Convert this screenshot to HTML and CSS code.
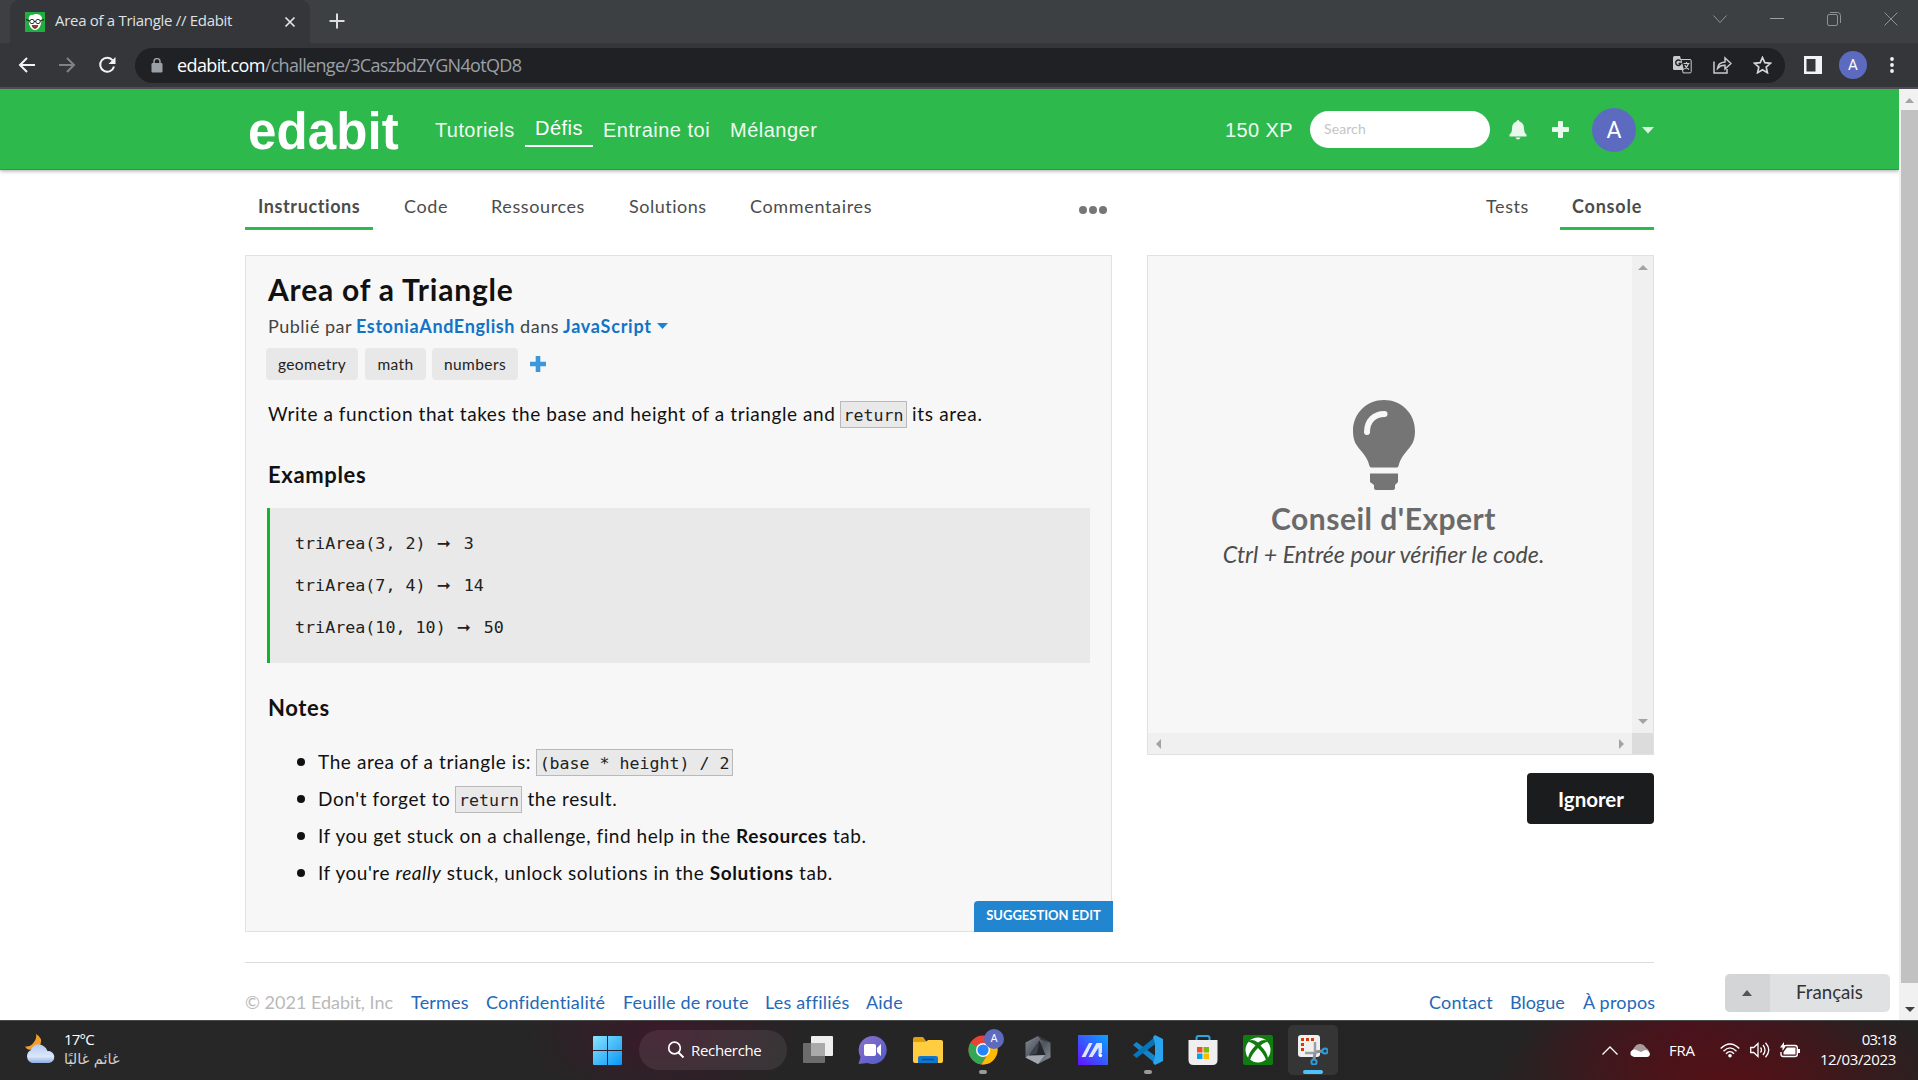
FILE: index.html
```html
<!DOCTYPE html>
<html lang="fr">
<head>
<meta charset="utf-8">
<title>Area of a Triangle // Edabit</title>
<link rel="stylesheet" href="styles.css">
</head>
<body>
<div class="tabstrip">
  <div class="browser-tab">
    <svg class="favicon" width="20" height="20" viewBox="0 0 20 20"><rect width="20" height="20" fill="#1fae3f"/><path d="M4 8C3 4 6 2 8 3C10 1 15 2 16 4C18 6 16 9 16 12Q14 18 10 18Q6 18 4 12Z" fill="#fff"/><circle cx="7" cy="9.5" r="2.2" fill="#fff" stroke="#333"/><circle cx="13" cy="9.5" r="2.2" fill="#fff" stroke="#333"/><path d="M1 7.5L5 9M19 7.5L15 9M9 9.5h2" stroke="#222" stroke-width="1.2"/><path d="M7 13.5h6q-1 3-3 3t-3-3Z" fill="#a33" stroke="#222" stroke-width=".6"/></svg>
    <span class="browser-tab-title">Area of a Triangle // Edabit</span>
    <svg class="tab-close" width="12" height="12" viewBox="0 0 12 12"><path d="M1.5 1.5l9 9M10.5 1.5l-9 9" stroke="#e4e5e7" stroke-width="1.7"/></svg>
  </div>
  <svg class="new-tab" width="16" height="16" viewBox="0 0 16 16"><path d="M8 .5v15M.5 8h15" stroke="#dcdde0" stroke-width="2"/></svg>
  <div class="window-controls">
    <svg width="14" height="10" viewBox="0 0 14 10"><path d="M.5 1.5L7 8.5L13.500 1.500" fill="none" stroke="#8d9395"/></svg>
    <svg width="14" height="10" viewBox="0 0 14 10"><path d="M0 4.500H14" stroke="#9aa0a2"/></svg>
    <svg width="14" height="14" viewBox="0 0 14 14"><rect x=".5" y="2.500" width="10" height="11" rx="1.500" fill="none" stroke="#8d9395"/><path d="M3 .500h7.500a3 3 0 0 1 3 3V11" fill="none" stroke="#8d9395"/></svg>
    <svg width="14" height="14" viewBox="0 0 14 14"><path d="M.5.500l13 13M13.500.500l-13 13" stroke="#8d9395"/></svg>
  </div>
</div>

<div class="toolbar">
  <svg class="nav-icon" width="18" height="18" viewBox="0 0 18 18"><path d="M17 9H2.500M9 2L2 9l7 7" fill="none" stroke="#f1f3f4" stroke-width="2"/></svg>
  <svg class="nav-icon" width="18" height="18" viewBox="0 0 18 18"><path d="M1 9h14.500M9 2l7 7-7 7" fill="none" stroke="#808386" stroke-width="2"/></svg>
  <svg class="nav-icon" width="18" height="18" viewBox="0 0 18 18"><path d="M14.800 4.500A7 7 0 1 0 16 10.500" fill="none" stroke="#f1f3f4" stroke-width="2"/><path d="M17.500 1v7h-7Z" fill="#f1f3f4"/></svg>
  <div class="address-bar">
    <svg class="lock" width="12" height="15" viewBox="0 0 12 15"><rect x=".5" y="5" width="11" height="9.500" rx="1.200" fill="#9aa0a6"/><path d="M3 6V3.500a3 3 0 0 1 6 0V6" fill="none" stroke="#9aa0a6" stroke-width="1.500"/></svg>
    <span class="host">edabit.com</span><span class="path">/challenge/3CaszbdZYGN4otQD8</span>
    <div class="address-actions">
      <svg width="19" height="18" viewBox="0 0 19 18"><path d="M8 3.500h9a1.200 1.200 0 0 1 1.200 1.200v11a1.200 1.200 0 0 1-1.200 1.200H10Z" fill="none" stroke="#c8cacc"/><path d="M1.500 0H7l4 14H1.500Q0 14 0 12.500V1.500Q0 0 1.500 0Z" fill="#c8cacc"/><path d="M7.600 5.200A2.700 2.700 0 1 0 8 7.500H5.500" fill="none" stroke="#202124" stroke-width="1.400"/><path d="M10.500 7.500h6M13.500 6v1.500M15.500 7.500Q14.500 11 11.500 13M11.800 9Q13 12 16 13.500" fill="none" stroke="#c8cacc" stroke-width="1.200"/></svg>
      <svg width="19" height="18" viewBox="0 0 19 18"><path d="M1 5.500V17h13v-4M4.500 12.500Q5 6.500 12 6V2l6 5.500-6 5.500V9.300Q7.500 9 4.500 12.500Z" fill="none" stroke="#c8cacc" stroke-width="1.500"/></svg>
      <svg width="19" height="18" viewBox="0 0 19 18"><path d="M9.500 1.500l2.300 5.200 5.700.6-4.300 3.800 1.200 5.600-4.900-2.900-4.900 2.900 1.200-5.600L1.500 7.300l5.700-.6Z" fill="none" stroke="#d2d4d6" stroke-width="1.700"/></svg>
    </div>
  </div>
  <svg class="side-panel" width="18" height="18" viewBox="0 0 18 18"><path d="M0 0h18v18H0ZM2.500 3v12.500h9V3Z" fill="#f1f3f4" fill-rule="evenodd"/></svg>
  <span class="profile">A</span>
  <svg width="4" height="16" viewBox="0 0 4 16"><g fill="#f1f3f4"><circle cx="2" cy="2" r="1.900"/><circle cx="2" cy="8" r="1.900"/><circle cx="2" cy="14" r="1.900"/></g></svg>
</div>

<div class="viewport">
  <div class="page">
    <header class="site-header">
      <div class="header-inner">
        <div class="logo">edabit</div>
        <nav class="site-nav">
          <a class="nav-tutorials">Tutoriels</a>
          <a class="nav-challenges">Défis</a>
          <a class="nav-practice">Entraine toi</a>
          <a class="nav-shuffle">Mélanger</a>
        </nav>
        <div class="account">
          <span class="xp">150 XP</span>
          <div class="search">Search</div>
          <svg class="bell" width="18" height="20" viewBox="0 0 18 20"><path d="M9 0Q10.300 0 10.500 1.600Q15 3 15 8.500Q15 13 17.500 14.500V16.500H.5V14.500Q3 13 3 8.500Q3 3 7.500 1.600Q7.700 0 9 0ZM6.500 17.500h5Q11 19.500 9 19.500T6.500 17.500Z" fill="#e9f8ec"/></svg>
          <svg class="add" width="17" height="17" viewBox="0 0 17 17"><path d="M6 1q0-1 1-1h3q1 0 1 1v5h5q1 0 1 1v3q0 1-1 1h-5v5q0 1-1 1H7q-1 0-1-1v-5H1q-1 0-1-1V7q0-1 1-1h5Z" fill="#e9f8ec"/></svg>
          <span class="avatar">A</span>
          <svg class="menu-caret" width="12" height="7" viewBox="0 0 12 7"><path d="M0 0h12L6 6.500Z" fill="#d8f7de"/></svg>
        </div>
      </div>
    </header>

    <div class="tabs">
      <a class="tab active tab-instructions">Instructions</a>
      <a class="tab tab-code">Code</a>
      <a class="tab tab-resources">Ressources</a>
      <a class="tab tab-solutions">Solutions</a>
      <a class="tab tab-comments">Commentaires</a>
      <svg class="more" width="28" height="8" viewBox="0 0 28 8"><g fill="#767676"><circle cx="4" cy="4" r="4"/><circle cx="14" cy="4" r="4"/><circle cx="24" cy="4" r="4"/></g></svg>
      <a class="tab tab-tests">Tests</a>
      <a class="tab active tab-console">Console</a>
    </div>

    <main class="columns">
      <section class="instructions">
        <h1>Area of a Triangle</h1>
        <p class="byline"><span class="by">Publié par</span><a class="author">EstoniaAndEnglish</a><span class="in">dans</span><a class="language">JavaScript</a><svg width="11" height="6" viewBox="0 0 11 6"><path d="M0 0h11L5.500 6Z" fill="#1e82d2"/></svg></p>
        <div class="tags">
          <span class="tag tag-geometry">geometry</span>
          <span class="tag tag-math">math</span>
          <span class="tag tag-numbers">numbers</span>
          <svg width="16" height="16" viewBox="0 0 16 16"><path d="M5.700 0h4.600v5.700H16v4.600h-5.700V16H5.700v-5.700H0V5.700h5.700Z" fill="#3c97dc"/></svg>
        </div>
        <p class="lead"><span class="lead-start">Write a function that takes the base and height of a triangle and</span><code>return</code><span class="lead-end">its area.</span></p>
        <h2>Examples</h2>
        <div class="examples">
          <div>triArea(3, 2) <span class="arrow">➞</span> 3</div>
          <div>triArea(7, 4) <span class="arrow">➞</span> 14</div>
          <div>triArea(10, 10) <span class="arrow">➞</span> 50</div>
        </div>
        <h2 class="notes-title">Notes</h2>
        <ul class="notes">
          <li>The area of a triangle is:<code>(base * height) / 2</code></li>
          <li>Don't forget to<code>return</code>the result.</li>
          <li class="tight">If you get stuck on a challenge, find help in the <b>Resources</b> tab.</li>
          <li class="tight">If you're <em>really</em> stuck, unlock solutions in the <b>Solutions</b> tab.</li>
        </ul>
        <a class="suggest">SUGGESTION EDIT</a>
      </section>
      <section class="side">
        <div class="console">
          <div class="tip">
            <svg width="62" height="90" viewBox="0 0 62 90"><path d="M31 0C48 0 62 13 62 31C62 42 58 46 53 52C49 57 47 60 45.500 66Q45 67.500 43.500 67.500H18.500Q17 67.500 16.500 66C15 60 13 57 9 52C4 46 0 42 0 31C0 13 14 0 31 0Z" fill="#757575"/><path d="M17 73.500h28v8.500l-3 3v3q0 2-2 2H23q-2 0-2-2v-3l-4-3Z" fill="#757575"/><path d="M14 32C14 21 21 14 31.500 14" fill="none" stroke="#f7f7f7" stroke-width="6" stroke-linecap="round"/></svg>
            <h3>Conseil d'Expert</h3>
            <p>Ctrl + Entrée pour vérifier le code.</p>
          </div>
          <div class="vbar">
            <svg width="10" height="5" viewBox="0 0 10 5"><path d="M5 0l5 5H0Z" fill="#a3a3a3"/></svg>
            <svg width="10" height="5" viewBox="0 0 10 5"><path d="M0 0h10L5 5Z" fill="#a3a3a3"/></svg>
          </div>
          <div class="hbar">
            <svg width="5" height="10" viewBox="0 0 5 10"><path d="M5 0v10L0 5Z" fill="#a3a3a3"/></svg>
            <svg width="5" height="10" viewBox="0 0 5 10"><path d="M0 0v10l5-5Z" fill="#a3a3a3"/></svg>
          </div>
          <div class="corner"></div>
        </div>
        <button class="skip">Ignorer</button>
      </section>
    </main>

    <footer class="site-footer">
      <span class="copyright">© 2021 Edabit, Inc</span>
      <a class="f-terms">Termes</a><a class="f-privacy">Confidentialité</a><a class="f-roadmap">Feuille de route</a><a class="f-affiliates">Les affiliés</a><a class="f-help">Aide</a>
      <a class="f-contact">Contact</a><a class="f-blog">Blogue</a><a class="f-about">À propos</a>
    </footer>
    <div class="language-picker">
      <span class="picker-toggle"><svg width="10" height="6" viewBox="0 0 10 6"><path d="M5 0l5 6H0Z" fill="#555"/></svg></span>
      <span class="picker-label">Français</span>
    </div>
  </div>
  <div class="page-scrollbar">
    <svg width="9" height="5" viewBox="0 0 9 5"><path d="M4.500 0L9 5H0Z" fill="#a3a3a3"/></svg>
    <div class="thumb"></div>
    <svg width="10" height="5" viewBox="0 0 10 5"><path d="M0 0h10L5 5Z" fill="#404040"/></svg>
  </div>
</div>

<div class="taskbar">
  <svg class="weather-icon" width="32" height="30" viewBox="0 0 32 30"><defs><linearGradient id="cloud" x2="0" y2="1"><stop stop-color="#b5caf2"/><stop offset=".65" stop-color="#dbe7fc"/><stop offset="1" stop-color="#8eacdf"/></linearGradient></defs><path d="M12 0Q19 4 16.500 10.500Q12 18 3 15L1 12.500Q7 13 10 8Q13 4 12 0Z" fill="#efa02f"/><path d="M8 29a7 7 0 0 1-1-13Q9 10 15 10.500T23.500 17A6 6 0 1 1 25 29Z" fill="url(#cloud)"/></svg>
  <div class="weather"><span>17°C</span><span class="weather-state" dir="rtl">غائم غالبًا</span></div>
  <svg class="start" width="29" height="29" viewBox="0 0 29 29"><defs><linearGradient id="win" x2="1" y2="1"><stop stop-color="#8be4ff"/><stop offset="1" stop-color="#0796f6"/></linearGradient></defs><path d="M1 0h13v14H0V1Q0 0 1 0ZM15 0h13q1 0 1 1v13H15ZM0 15h14v14H1q-1 0-1-1ZM15 15h14v13q0 1-1 1H15Z" fill="url(#win)"/></svg>
  <div class="task-search"><svg width="18" height="18" viewBox="0 0 18 18"><circle cx="7.500" cy="7" r="5.800" fill="none" stroke="#fff" stroke-width="1.700"/><path d="M11.500 11.500l5 5" stroke="#fff" stroke-width="2"/></svg><span>Recherche</span></div>
  <div class="apps">
    <svg class="app" viewBox="0 0 30 30"><rect x="8" y="1" width="22" height="20" rx="1" fill="#eee"/><rect y="8" width="22" height="20" rx="1" fill="#6c6c6c"/><rect x="8" y="8" width="14" height="13" fill="#aaa"/></svg>
    <svg class="app" viewBox="0 0 30 30"><defs><linearGradient id="chat" x2="1" y2="1"><stop stop-color="#8b73cc"/><stop offset="1" stop-color="#5059c9"/></linearGradient></defs><path d="M14.500 1a14 14 0 1 1-5 27L.5 29l2-7A14 14 0 0 1 14.500 1Z" fill="url(#chat)"/><rect x="6" y="9" width="12" height="12" rx="2" fill="#fff"/><path d="M19 13l4-4v12l-4-4Z" fill="#fff"/></svg>
    <svg class="app" viewBox="0 0 30 30"><path d="M0 4q0-2 2-2h8l3 4H30V10H0Z" fill="#e2a008"/><path d="M0 7H13l2-2h13q2 0 2 2v19q0 2-2 2H2q-2 0-2-2Z" fill="#ffcd3f"/><path d="M5 28v-5q0-2 2-2h16q2 0 2 2v5Z" fill="#1277cc"/><path d="M9 24.500h12" stroke="#064e91" stroke-width="1.400"/></svg>
    <div class="app-slot">
      <svg class="app" viewBox="0 0 30 30"><circle cx="15" cy="15" r="14.500" fill="#e94335"/><path d="M15 15L2.400 7.800A14.500 14.500 0 0 0 13.500 29.400L19 19Z" fill="#33a853"/><path d="M15 8.500H28A14.500 14.500 0 0 1 13.500 29.400L21 17Z" fill="#fbbc05"/><circle cx="15" cy="15" r="7" fill="#fff"/><circle cx="15" cy="15" r="5.600" fill="#2684fc"/></svg>
      <span class="app-badge">A</span><i class="running"></i>
    </div>
    <svg class="app" viewBox="0 0 30 30"><defs><linearGradient id="gem" x2="1" y2="1"><stop stop-color="#858d97"/><stop offset=".5" stop-color="#4d545d"/><stop offset="1" stop-color="#8b929b"/></linearGradient></defs><path d="M15 1l12.500 6.500v15L15 29 2.500 22.500v-15Z" fill="url(#gem)"/><path d="M15 1l12.500 6.500L18 5Z" fill="#343940"/><path d="M2.500 22.500L6 20l16 0-7 9Z" fill="#a2a8ae"/><path d="M16.500 5.500L6 20.500l16.500-.5Z" fill="#24272c"/><path d="M16.500 5.500L6 20.500l8-2Z" fill="#3d434b"/></svg>
    <svg class="app" viewBox="0 0 30 30"><defs><linearGradient id="ma" y1="1" x2="1" y2="0"><stop stop-color="#6510ff"/><stop offset="1" stop-color="#08a5ff"/></linearGradient></defs><rect width="30" height="30" fill="url(#ma)"/><path d="M3.500 22L11 8h3.500L7.500 22ZM10.500 22L18.500 8H24V17.500L20.500 21V12.500L14.500 22Z" fill="#dde6ff"/><circle cx="22.500" cy="20.500" r="1.700" fill="#fff"/></svg>
    <div class="app-slot">
      <svg class="app" viewBox="0 0 30 30"><path d="M0 10l3.500-3L23 21.500V29Z" fill="#1585cb"/><path d="M0 20l3.500 3L23 8.500V1Z" fill="#0874b9"/><path d="M22 0l8 4v22l-8 4-2-2 2-6V8l-2-6Z" fill="#29a4ee"/></svg>
      <i class="running"></i>
    </div>
    <svg class="app" viewBox="0 0 30 30"><path d="M8.500 6V3q0-2 2-2h9q2 0 2 2v3" fill="none" stroke="#27a8e0" stroke-width="2"/><path d="M.5 5H29.500V25q0 5-5 5H5.500q-5 0-5-5Z" fill="#efefef"/><path d="M9 12h5.500v5.500H9Z" fill="#f25022"/><path d="M15.500 12H21v5.500h-5.500Z" fill="#7fba00"/><path d="M9 18.500h5.500V24H9Z" fill="#00a4ef"/><path d="M15.500 18.500H21V24h-5.500Z" fill="#ffb900"/></svg>
    <svg class="app" viewBox="0 0 30 30"><rect width="30" height="30" rx="2" fill="#107c10"/><circle cx="15" cy="15" r="12.500" fill="#fff"/><path d="M6.500 5.500Q10 4 15 7.500Q20 4 23.500 5.500L25 7Q22 6.500 17.500 10.500Q24 17 25 23L23 25Q21 19 15 13Q9 19 7 25L5 23Q6 17 12.500 10.500Q8 6.500 5 7Z" fill="#107c10"/></svg>
    <div class="app-slot current">
      <svg class="app" viewBox="0 0 30 30"><rect y="0" width="22" height="22" rx="3" fill="#f0f0f0"/><path d="M4.500 16V4.500h12.500" fill="none" stroke="#d83b01" stroke-width="3" stroke-dasharray="3 2"/><path d="M17 7v11H7" fill="none" stroke="#9ba0a6" stroke-width="2.500"/><path d="M18 17l6-1M17 18l-1 6" stroke="#8a9097" stroke-width="3"/><circle cx="27" cy="16" r="2.600" fill="none" stroke="#2a9de0" stroke-width="2"/><circle cx="16" cy="27" r="2.600" fill="none" stroke="#2a9de0" stroke-width="2"/></svg>
      <i class="running"></i>
    </div>
  </div>
  <div class="tray">
    <svg width="16" height="9" viewBox="0 0 16 9"><path d="M.5 8.500L8 1l7.500 7.500" fill="none" stroke="#fff" stroke-width="1.300"/></svg>
    <svg class="cloud" width="20" height="13" viewBox="0 0 20 13"><path d="M3 11a5 5 0 0 1 1-7Q6 0 10 0t6 4q3 1 3 5Z" fill="#a9999d"/><path d="M2 12Q0 11 .500 8Q2 5 5 5.500L11 8l4-2q4 0 5 4-.5 3-3 3H4Z" fill="#fff"/></svg>
    <span class="keyboard">FRA</span>
    <svg class="wifi" width="20" height="15" viewBox="0 0 20 15"><g fill="none" stroke="#fff" stroke-width="1.400"><path d="M.7 5.500Q10-3.500 19.300 5.500"/><path d="M3.500 8.200Q10 1.500 16.500 8.200"/><path d="M6 10.800Q10 6.500 14 10.800"/></g><circle cx="10" cy="12.800" r="1.800" fill="#fff"/></svg>
    <svg class="volume" width="20" height="16" viewBox="0 0 20 16"><g fill="none" stroke="#fff" stroke-width="1.300"><path d="M.7 5.500h3L8 1.500v13l-4.300-4h-3Z"/><path d="M10.500 5.500q2 2.500 0 5M13 3q4 5 0 10M15.500.8q6.500 7.200 0 14.400"/></g></svg>
    <svg class="battery" width="20" height="16" viewBox="0 0 20 16"><path d="M6 3.500h9q2.300 0 2.300 2.300v6.400q0 2.300-2.300 2.300H3.300Q1 14.500 1 12.200V10" fill="none" stroke="#fff" stroke-width="1.400"/><path d="M7 5.500h8.500v7H3.500V10ZM18 7h2v4h-2ZM4 0v3h2.500L2.500 9V5.500H0Z" fill="#fff"/></svg>
    <div class="clock"><span class="time">03:18</span><span class="date">12/03/2023</span></div>
  </div>
</div>
</body>
</html>
```
FILE: styles.css
```css
* { box-sizing: border-box; }
body { margin: 0; width: 1918px; height: 1080px; overflow: hidden; display: flex; flex-direction: column; background: #fff; font-family: Lato, sans-serif; }
h1, h2, h3, p, ul { margin: 0; padding: 0; }
svg { display: block; flex: none; }
span, a { white-space: nowrap; }

/* Browser chrome */
.tabstrip { flex: none; height: 43px; background: #3c4042; display: flex; align-items: center; font-family: "Open Sans", sans-serif; }
.browser-tab { width: 300px; height: 43px; margin-left: 10px; padding-left: 15px; background: #35363a; border-radius: 9px 9px 0 0; display: flex; align-items: center; }
.browser-tab-title { margin-left: 10px; width: 229px; font-size: 15px; letter-spacing: -.3px; color: #dfe1e5; line-height: 41px; padding-bottom: 2px; }
.new-tab { margin-left: 19px; margin-bottom: 1px; }
.window-controls { margin-left: auto; padding: 0 20px 6px 0; display: flex; align-items: center; gap: 43px; }
.toolbar { flex: none; height: 46px; background: #35363a; border-bottom: 2px solid #504c55; display: flex; align-items: center; padding: 0 22px 0 18px; font-family: "Open Sans", sans-serif; }
.nav-icon { margin-right: 22px; }
.address-bar { width: 1650px; height: 35px; margin-left: -3px; padding: 0 13px 0 16px; border-radius: 18px; background: #202124; display: flex; align-items: center; font-size: 18px; letter-spacing: -.68px; }
.host { margin-left: 14px; color: #fff; letter-spacing: -.62px; }
.path { color: #9aa0a6; }
.address-actions { margin-left: auto; display: flex; gap: 21px; }
.side-panel { margin-left: 19px; }
.profile { width: 28px; height: 28px; margin: 0 23px 0 17px; border-radius: 50%; background: #5c6bc0; color: #fff; font: 15px/28px Roboto, sans-serif; text-align: center; }

/* Page frame */
.viewport { flex: 1; min-height: 0; display: flex; }
.page { flex: 1; position: relative; overflow: hidden; }
.page-scrollbar { width: 19px; background: #f1f1f1; display: flex; flex-direction: column; align-items: center; padding: 9px 0 8px 2px; }
.thumb { align-self: stretch; height: 873px; margin: 7px 0 auto; background: #c1c1c1; }

/* Site header */
.site-header { height: 81px; background: #2eb94d; border-bottom: 1px solid #12ab2c; box-shadow: 0 1px 4px rgba(0,0,0,.35); position: relative; }
.header-inner { width: 1409px; height: 82px; margin-left: 245px; padding-left: 3px; display: flex; align-items: center; color: #eefbf0; font: 20px "Liberation Sans", sans-serif; }
.logo { width: 187px; padding-top: 3px; font: bold 51px/56px "Liberation Sans", sans-serif; color: #fff; letter-spacing: .1px; }
.site-nav { display: flex; line-height: 34px; letter-spacing: .5px; }
.nav-tutorials { width: 90px; letter-spacing: .4px; }
.nav-challenges { width: 68px; height: 34px; margin-top: -2px; line-height: 35px; text-align: center; color: #fff; box-shadow: 0 2px 0 #fff; }
.nav-practice { width: 137px; padding-left: 10px; }
.account { margin-left: auto; display: flex; align-items: center; }
.xp { width: 85px; letter-spacing: .4px; }
.search { width: 180px; height: 37px; margin: -1px 19px 0 0; padding-left: 14px; border-radius: 19px; background: #fff; color: #c5c5c5; font: 14px/36px Lato, sans-serif; letter-spacing: .1px; }
.bell { margin-right: 25px; }
.add { margin: -1px 23px 0 0; }
.avatar { width: 44px; height: 44px; margin-right: 6px; border-radius: 50%; background: #5c6bc0; color: #fff; font: 23px/45px Roboto, sans-serif; text-align: center; }

/* Section tabs */
.tabs { height: 85px; width: 1409px; margin-left: 245px; padding-top: 12px; display: flex; align-items: flex-start; }
.tab { height: 48px; font-size: 18px; line-height: 48px; color: #4c4c4c; letter-spacing: .6px; }
.tab.active { font-weight: bold; box-shadow: inset 0 -3px #2eb94d; padding-left: 13px; }
.tab-instructions { width: 128px; margin-right: 31px; letter-spacing: .6px; }
.tab-code { width: 87px; }
.tab-resources { width: 138px; }
.tab-solutions { width: 121px; letter-spacing: .5px; }
.tab-comments { width: 329px; letter-spacing: .65px; }
.more { margin: 24px auto 0 0; }
.tab-tests { width: 74px; letter-spacing: .6px; }
.tab-console { width: 94px; letter-spacing: .8px; }
.tab-console.active { padding-left: 12px; }

/* Instructions */
.columns { width: 1409px; margin-left: 245px; display: grid; grid-template-columns: 867px 507px; column-gap: 35px; }
.instructions { position: relative; height: 677px; border: 1px solid #e1e1e1; background: #f7f7f7; padding: 15px 21px 0 21px; color: #111; }
h1 { margin-left: 1px; font-size: 30px; line-height: 36px; letter-spacing: .8px; }
.byline { margin: 6px 0 0 1px; height: 26px; display: flex; align-items: center; font-size: 18px; line-height: 26px; color: #444; }
.by { width: 88px; letter-spacing: .5px; }
.author, .language { font-weight: bold; color: #1273c6; }
.author { width: 164px; letter-spacing: .62px; }
.in { width: 43px; letter-spacing: .6px; }
.language { width: 94px; letter-spacing: .75px; }
.tags { margin: 9px 0 0 -1px; height: 32px; display: flex; align-items: center; }
.tag { height: 32px; border-radius: 4px; background: #e8e8e8; font-size: 15.5px; line-height: 32px; text-align: center; color: #222; letter-spacing: .4px; }
.tag-geometry { width: 92px; margin-right: 7px; }
.tag-math { width: 61px; margin-right: 6px; }
.tag-numbers { width: 86px; margin-right: 12px; }
.lead { height: 30px; margin: 19px 0 0 1px; display: flex; align-items: center; font-size: 19px; line-height: 30px; }
.lead-start { width: 572px; letter-spacing: .57px; }
.lead-end { margin-left: 5px; letter-spacing: .7px; }
code { display: inline-block; height: 27px; margin-top: 1px; padding: 0 2.500px; border: 1px solid #b9b9b9; background: #e9e9e9; font: 16.600px/27px "DejaVu Sans Mono", monospace; color: #222; white-space: pre; }
h2 { height: 30px; margin: 31px 0 0 1px; font-size: 22px; line-height: 30px; letter-spacing: .65px; }
.examples { height: 155px; margin: 18px 0 0; padding: 14px 0 0 25px; border-left: 3px solid #12b42d; background: #e9e9e9; font: 16.700px/42px "DejaVu Sans Mono", monospace; color: #222; }
.examples div { height: 42px; white-space: pre; }
.arrow { display: inline-block; width: 18px; padding-left: 1px; line-height: 20px; font-family: "DejaVu Sans", sans-serif; }
.notes-title { margin-top: 30px; }
.notes { margin: 20px 0 0 30px; list-style: none; }
.notes li { height: 37px; display: flex; align-items: center; font-size: 19px; letter-spacing: .58px; white-space: pre; }
.notes li::before { content: ""; flex: none; width: 8px; height: 8px; margin-right: 13px; border-radius: 50%; background: #111; }
.notes code { margin: 1px 5px 0 5px; letter-spacing: 0; }
.notes .tight { letter-spacing: .55px; }
.notes b { letter-spacing: .6px; }
.suggest { position: absolute; right: -2px; bottom: -1px; width: 139px; height: 31px; border-radius: 4px 0 0 0; background: #2185d0; color: #fff; font-size: 13px; font-weight: bold; line-height: 28px; text-align: center; }

/* Console */
.console { height: 500px; border: 1px solid #e1e1e1; display: grid; grid-template: 1fr 21px / 1fr 21px; }
.tip { background: #f7f7f7; padding: 144px 13px 0 0; display: flex; flex-direction: column; align-items: center; }
.tip h3 { margin-top: 10px; font-size: 30px; line-height: 36px; letter-spacing: .5px; color: #6a6a6a; }
.tip p { font-size: 23.250px; line-height: 36px; font-style: italic; color: #4c4c4c; }
.vbar, .hbar { background: #f0f0f0; display: flex; align-items: center; justify-content: space-between; }
.vbar { flex-direction: column; padding: 9px 0; }
.hbar { padding: 0 8px; }
.corner { background: #dcdcdc; }
.skip { display: block; width: 127px; height: 51px; margin: 18px 0 0 auto; padding: 1px 0 0 1px; border: 0; border-radius: 4px; background: #1b1c1d; color: #fff; font: bold 20.500px/49px Lato, sans-serif; }

/* Footer */
.site-footer { width: 1409px; margin: 30px 0 0 245px; padding-top: 26px; border-top: 1px solid #dcdcdc; display: flex; font-size: 18px; line-height: 26px; letter-spacing: .2px; color: #2468b8; }
.copyright { width: 166px; color: #b9b9b9; letter-spacing: 0; }
.f-terms { width: 75px; }
.f-privacy { width: 137px; }
.f-roadmap { width: 142px; }
.f-affiliates { width: 101px; }
.f-contact { margin-left: auto; width: 81px; }
.f-blog { width: 73px; letter-spacing: 0; }
.f-about { width: 71px; }
.language-picker { position: absolute; right: 9px; top: 885px; width: 165px; height: 38px; border-radius: 5px; overflow: hidden; display: flex; background: #e0e1e2; }
.picker-toggle { width: 45px; padding-right: 2px; background: #d4d5d6; display: flex; align-items: center; justify-content: center; }
.picker-label { padding-left: 26px; font-size: 18.700px; line-height: 36px; color: #333; }

/* Taskbar */
.taskbar { flex: none; height: 60px; padding-bottom: 1px; border-top: 1px solid #4a4a4a; display: flex; align-items: center; color: #fff; font: 15px "Open Sans", "Noto Sans", "DejaVu Sans", sans-serif; background: radial-gradient(ellipse 240px 90px at 1730px 60px, #531015, rgba(80,16,26,0)), radial-gradient(ellipse 170px 90px at 1690px 10px, #451420, rgba(60,20,30,0)), radial-gradient(ellipse 140px 70px at 665px 15px, #3b1a29, rgba(50,25,35,0)), linear-gradient(90deg, #272727, #232323); }
.weather-icon { margin-left: 24px; margin-bottom: 2px; }
.weather { width: 529px; margin-left: 8px; padding-bottom: 2px; display: flex; flex-direction: column; align-items: flex-start; line-height: 20px; letter-spacing: -.8px; }
.weather-state { font-family: "DejaVu Sans", sans-serif; font-size: 14.500px; letter-spacing: 0; color: #d0d0d0; }
.task-search { width: 148px; height: 40px; margin-left: 17px; padding-left: 28px; border-radius: 20px; background: rgba(255,255,255,.08); display: flex; align-items: center; gap: 6px; letter-spacing: -.33px; }
.apps { margin-left: 16px; display: flex; align-items: center; gap: 25px; }
.app { width: 30px; height: 30px; }
.app-slot { position: relative; height: 50px; width: 30px; display: flex; align-items: center; }
.current { width: 50px; margin-left: -10px; padding: 0 0 1px 10px; border-radius: 5px; background: rgba(255,255,255,.08); }
.running { position: absolute; left: 11px; bottom: 1px; width: 8px; height: 4px; border-radius: 2px; background: #9a9a9a; }
.current .running { left: 15px; bottom: 1px; width: 20px; background: #4cc2ff; }
.app-badge { position: absolute; left: 16px; top: 4px; width: 20px; height: 20px; border-radius: 50%; background: #5c6bc0; font: 11px/20px Roboto, sans-serif; text-align: center; }
.tray { margin-left: auto; padding-right: 22px; display: flex; align-items: center; }
.cloud { margin: 0 19px 0 12px; }
.keyboard { width: 51px; letter-spacing: -.2px; }
.volume { margin: 0 10px; }
.clock { width: 96px; padding-bottom: 3px; display: flex; flex-direction: column; align-items: flex-end; line-height: 20px; letter-spacing: -.35px; }
.time { letter-spacing: -.8px; }
```
